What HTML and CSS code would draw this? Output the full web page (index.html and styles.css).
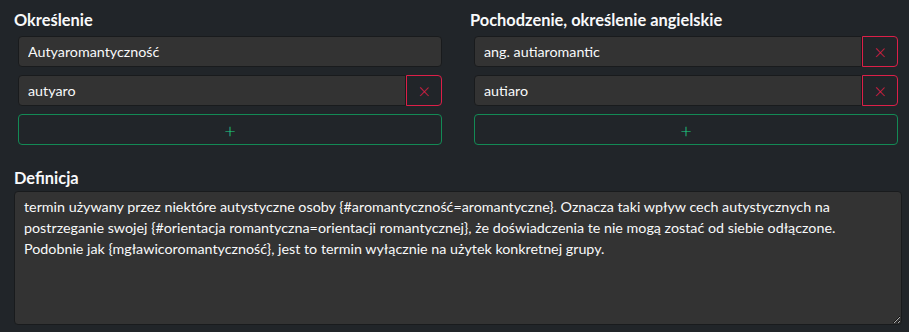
FILE: index.html
```html
<!DOCTYPE html>
<html lang="pl">
<head>
  <meta charset="UTF-8" />
  <title>Edycja hasła</title>
  <link rel="stylesheet" href="styles.css">
</head>
<body>
  <div class="editor">
    <div class="columns">
      <div class="field">
        <h3>Określenie</h3>
        <div class="entry">
          <input type="text" value="Autyaromantyczność" />
        </div>
        <div class="entry">
          <input type="text" value="autyaro" />
          <button class="remove">&times;</button>
        </div>
        <button class="add">+</button>
      </div>

      <div class="field">
        <h3>Pochodzenie, określenie angielskie</h3>
        <div class="entry">
          <input type="text" value="ang. autiaromantic" />
          <button class="remove">&times;</button>
        </div>
        <div class="entry">
          <input type="text" value="autiaro" />
          <button class="remove">&times;</button>
        </div>
        <button class="add">+</button>
      </div>
    </div>

    <h3 class="def-title">Definicja</h3>
    <textarea class="definition" spellcheck="false">termin używany przez niektóre autystyczne osoby {#aromantyczność=aromantyczne}. Oznacza taki wpływ cech autystycznych na postrzeganie swojej {#orientacja romantyczna=orientacji romantycznej}, że doświadczenia te nie mogą zostać od siebie odłączone. Podobnie jak {mgławicoromantyczność}, jest to termin wyłącznie na użytek konkretnej grupy.</textarea>
  </div>
</body>
</html>
```

FILE: styles.css
```css
* {
  margin: 0;
  padding: 0;
  box-sizing: border-box;
  font-family: 'Lato', sans-serif;
}

body {
  background: #212529;
  color: #f8f9fa;
}

.editor {
  padding: 10px 7px 0 14px;
}

h3 {
  font-size: 16.4px;
  font-weight: 700;
  line-height: 20px;
  margin-bottom: 6px;
}

.columns {
  display: grid;
  grid-template-columns: 1fr 1fr;
  gap: 24px;
}

.entry {
  display: flex;
  margin: 0 4px 8px;
}

.entry input {
  flex: 1;
  height: 31px;
  background: #333333;
  color: #f8f9fa;
  border: 1px solid #191b1d;
  border-radius: 4px;
  padding: 0 9px;
  font-size: 14.3px;
  outline: none;
}

.entry input:not(:last-child) {
  border-top-right-radius: 0;
  border-bottom-right-radius: 0;
}

.remove {
  width: 36px;
  height: 31px;
  background: transparent;
  border: 1px solid #dc1f48;
  border-radius: 0 4px 4px 0;
  color: #dc1f48;
  font-size: 21px;
  font-weight: 300;
  line-height: 1;
  cursor: pointer;
}

.add {
  display: block;
  width: calc(100% - 8px);
  margin: 0 4px;
  height: 31px;
  background: transparent;
  border: 1px solid #138a55;
  border-radius: 4px;
  color: #1fd286;
  font-size: 20px;
  font-weight: 300;
  line-height: 1;
  cursor: pointer;
}

.def-title {
  margin-top: 23px;
  margin-bottom: 3px;
}

.definition {
  display: block;
  width: 100%;
  height: 134px;
  background: #333333;
  color: #f8f9fa;
  border: 1px solid #191b1d;
  border-radius: 4px;
  padding: 4px 9px;
  font-size: 14.3px;
  line-height: 21px;
  outline: none;
}
```
